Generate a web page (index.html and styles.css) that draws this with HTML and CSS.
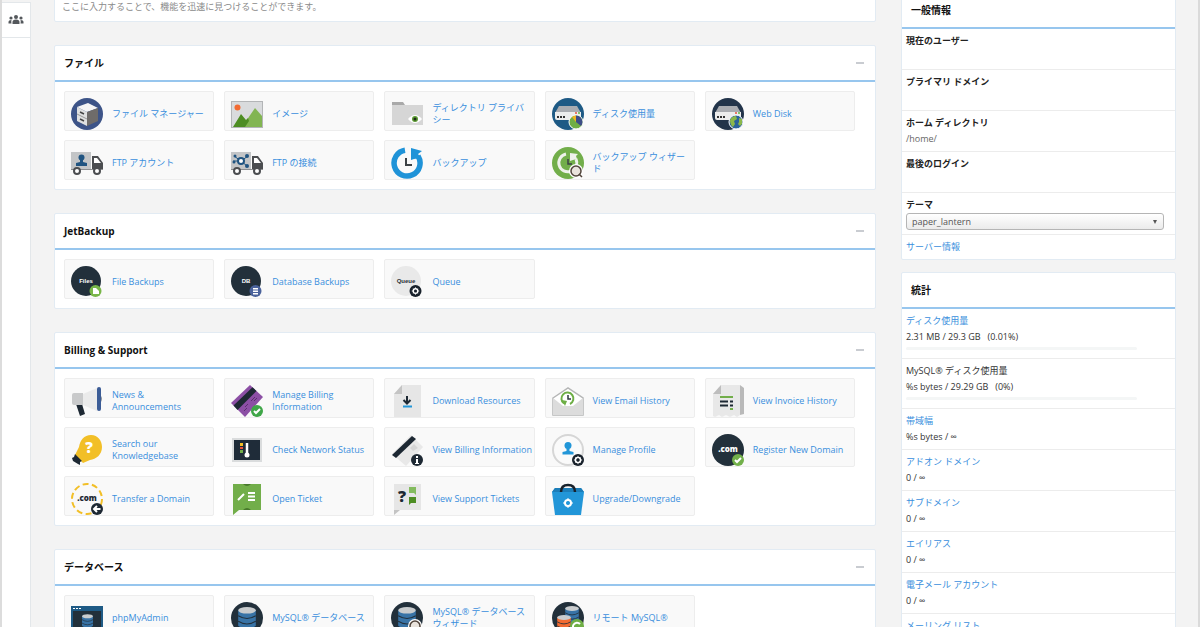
FILE: index.html
```html
<!DOCTYPE html>
<html lang="ja">
<head>
    <meta charset="UTF-8">
    <meta name="viewport" content="width=device-width, initial-scale=1.0">
    <title>cPanel</title>
    <link rel="stylesheet" href="styles.css">
</head>
<body>
    <!-- shared icon parts -->
    <svg class="defs" aria-hidden="true">
        <symbol id="truck" viewBox="0 0 32 32">
            <rect x="0" y="5" width="20" height="17" fill="#c3c5c7"/>
            <path d="M21 9h6l5 7v7H21z" fill="#4b4d50"/>
            <path d="M23 11h3l4 5h-7z" fill="#fff"/>
            <path d="M0 22h32v1H0z" fill="#8c8e90"/>
            <circle cx="6" cy="24" r="3" fill="#fff" stroke="#4b4d50" stroke-width="2"/>
            <circle cx="26" cy="24" r="3" fill="#fff" stroke="#4b4d50" stroke-width="2"/>
        </symbol>
        <symbol id="server" viewBox="0 0 32 32">
            <path d="M7 8h18l4 7H3z" fill="#a9acb1"/>
            <path d="M3 14h26v6q0 2-2 2H5q-2 0-2-2z" fill="#eceded"/>
            <path d="M5 18h2v2H5zM8 18h2v2H8zM11 18h2v2h-2z" fill="#333"/>
            <circle cx="24" cy="15" r="1" fill="#e8503a"/>
            <circle cx="27" cy="15" r="1" fill="#5fb548"/>
        </symbol>
        <symbol id="db" viewBox="0 0 16 20">
            <path d="M0 3v14q8 6 16 0V3z" fill="currentColor"/>
            <path d="M0 8q8 5 16 0M0 13q8 5 16 0" fill="none" stroke="#22303c" stroke-width="1"/>
            <ellipse cx="8" cy="3" rx="8" ry="3" fill="#c9ccce"/>
        </symbol>
        <symbol id="gear" viewBox="0 0 12 12">
            <circle cx="6" cy="6" r="3" fill="none" stroke="#fff" stroke-width="2"/>
            <path d="M6 1v10M1 6h10M3 3l6 6M9 3l-6 6" stroke="#fff" stroke-width="1"/>
            <circle cx="6" cy="6" r="2" fill="currentColor"/>
        </symbol>
    </svg>

    <div class="page">
        <nav class="sidebar">
            <a href="#" aria-label="User Manager">
                <svg width="16" height="12" viewBox="0 0 16 12" fill="#54585c">
                    <circle cx="8" cy="3" r="2"/>
                    <circle cx="3" cy="4" r="1.6"/>
                    <circle cx="13" cy="4" r="1.6"/>
                    <path d="M4.500 10V8q0-2.500 3.500-2.500T11.500 8v2zM.500 9.500V8q0-2 3-2-.500 1.500 0 3.500zM15.500 9.500V8q0-2-3-2 .500 1.500 0 3.500z"/>
                </svg>
            </a>
        </nav>

        <main class="main">
            <div class="panel search">
                <input type="text" aria-label="検索" placeholder="ここに入力することで、機能を迅速に見つけることができます。">
            </div>

            <section class="panel">
                <div class="panel-header">
                    <h2>ファイル</h2>
                    <button class="collapse" aria-label="折りたたむ"></button>
                </div>
                <div class="tiles">
                    <a href="#" class="tile">
                        <svg class="icon" viewBox="0 0 32 32">
                            <circle cx="16" cy="16" r="16" fill="#3d5488"/>
                            <path d="M6 9l11-4 10 5-11 4z" fill="#f6f6f6"/>
                            <path d="M6 9l10 5v14L6 23z" fill="#dfe0e0"/>
                            <path d="M16 14l11-4v13l-11 5z" fill="#6f6c6a"/>
                            <path d="M6 16l10 5" stroke="#9a9a9a"/>
                            <path d="M9 14l4 2M9 21l4 2" stroke="#444" stroke-width="1.500"/>
                        </svg>
                        <span>ファイル マネージャー</span>
                    </a>
                    <a href="#" class="tile">
                        <svg class="icon" viewBox="0 0 32 32">
                            <rect x="0.500" y="3.500" width="31" height="26" fill="#d9dbdd" stroke="#b3b5b7"/>
                            <circle cx="6.500" cy="9.500" r="3" fill="#f26b32"/>
                            <path d="M11 29L24 10l7 8v11z" fill="#82b552"/>
                            <path d="M2 29l8-13 5 6 2-2 1 3-4 6z" fill="#4d8d23"/>
                        </svg>
                        <span>イメージ</span>
                    </a>
                    <a href="#" class="tile">
                        <svg class="icon" viewBox="0 0 32 32">
                            <path d="M1 4h11l2 3v3H1z" fill="#a9a9a9"/>
                            <path d="M1 7h31v20H1z" fill="#d6d6d6"/>
                            <path d="M17 21q7-8 14 0-7 8-14 0z" fill="#fff"/>
                            <circle cx="24" cy="21" r="3" fill="#5d9b34"/>
                            <circle cx="24" cy="21" r="1.500" fill="#1d2a1a"/>
                        </svg>
                        <span>ディレクトリ プライバシー</span>
                    </a>
                    <a href="#" class="tile">
                        <svg class="icon" viewBox="0 0 32 32">
                            <circle cx="16" cy="16" r="16" fill="#1e5a85"/>
                            <use href="#server"/>
                            <circle cx="24" cy="24" r="7" fill="#6fae45" stroke="#fff"/>
                            <path d="M24 24v-6.500a6.500 6.500 0 0 1 5 10.500z" fill="#3d4d87"/>
                            <path d="M24 24v-6.500a6.500 6.500 0 0 0-4 1.500z" fill="#f0b323"/>
                        </svg>
                        <span>ディスク使用量</span>
                    </a>
                    <a href="#" class="tile">
                        <svg class="icon" viewBox="0 0 32 32">
                            <circle cx="16" cy="16" r="16" fill="#22344a"/>
                            <use href="#server"/>
                            <circle cx="24" cy="24" r="7" fill="#2a639c" stroke="#fff"/>
                            <path d="M18 22q2-4 6-4l1 3-3 2 1 3-2 3q-3-2-3-7zM27 20l3 1v5l-2 2-2-2 1-2z" fill="#8bb84a"/>
                        </svg>
                        <span>Web Disk</span>
                    </a>
                    <a href="#" class="tile">
                        <svg class="icon" viewBox="0 0 32 32">
                            <use href="#truck"/>
                            <circle cx="10.500" cy="10.500" r="3" fill="#205481"/>
                            <path d="M9 12h3v3l4 1v3H5v-3l4-1z" fill="#205481"/>
                        </svg>
                        <span>FTP アカウント</span>
                    </a>
                    <a href="#" class="tile">
                        <svg class="icon" viewBox="0 0 32 32">
                            <use href="#truck"/>
                            <path d="M3 9l7 5 7-5M2 14h8l6 5" fill="none" stroke="#205481"/>
                            <circle cx="10" cy="14" r="3" fill="#fff" stroke="#205481" stroke-width="2"/>
                            <circle cx="4" cy="9" r="1.500" fill="#205481"/>
                            <circle cx="16" cy="9" r="2" fill="#205481"/>
                            <circle cx="3" cy="15" r="1.500" fill="#205481"/>
                            <circle cx="16" cy="19" r="2" fill="#205481"/>
                        </svg>
                        <span>FTP の接続</span>
                    </a>
                    <a href="#" class="tile">
                        <svg class="icon" viewBox="0 0 32 32">
                            <path d="M14 3.200A13 13 0 1 0 27 9" fill="none" stroke="#1f93d8" stroke-width="5.500"/>
                            <path d="M20 1l11 3-4 3 3 4-7 1-3 1z" fill="#1f93d8"/>
                            <path d="M15 11v7h6" fill="none" stroke="#3c4145" stroke-width="2"/>
                        </svg>
                        <span>バックアップ</span>
                    </a>
                    <a href="#" class="tile">
                        <svg class="icon" viewBox="0 0 32 32">
                            <circle cx="16" cy="16" r="16" fill="#72ae4a"/>
                            <path d="M14 7A9 9 0 1 0 24 12" fill="none" stroke="#eef1ea" stroke-width="3"/>
                            <path d="M18 6l8 1-2 2 1 3-4 1-3 1z" fill="#eef1ea"/>
                            <path d="M16 12v5h4" fill="none" stroke="#3c4145" stroke-width="1.500"/>
                            <circle cx="24" cy="24" r="7" fill="#fff"/>
                            <circle cx="24" cy="24" r="5" fill="#e9e3dc" stroke="#51443b" stroke-width="1.500"/>
                            <path d="M27 27l3 3" stroke="#51443b" stroke-width="1.500"/>
                        </svg>
                        <span>バックアップ ウィザード</span>
                    </a>
                </div>
            </section>

            <section class="panel">
                <div class="panel-header">
                    <h2>JetBackup</h2>
                    <button class="collapse" aria-label="折りたたむ"></button>
                </div>
                <div class="tiles">
                    <a href="#" class="tile">
                        <svg class="icon" viewBox="0 0 32 32">
                            <circle cx="15" cy="15" r="15" fill="#22303b"/>
                            <text class="glyph" x="15" y="17" font-size="6" fill="#fff">Files</text>
                            <circle cx="24.500" cy="25" r="6" fill="#78b648"/>
                            <path d="M22 22h3l3 3v3h-6z" fill="#fff"/>
                        </svg>
                        <span>File Backups</span>
                    </a>
                    <a href="#" class="tile">
                        <svg class="icon" viewBox="0 0 32 32">
                            <circle cx="15" cy="15" r="15" fill="#22303b"/>
                            <text class="glyph" x="15" y="17" font-size="6" fill="#fff">DB</text>
                            <circle cx="24.500" cy="25" r="6" fill="#4a629b"/>
                            <path d="M22 22h5v1.500h-5zM22 24.500h5V26h-5zM22 27h5v1.500h-5z" fill="#fff"/>
                        </svg>
                        <span>Database Backups</span>
                    </a>
                    <a href="#" class="tile">
                        <svg class="icon" viewBox="0 0 32 32">
                            <circle cx="15" cy="15" r="15" fill="#e9e9e9"/>
                            <text class="glyph" x="15" y="17" font-size="6" fill="#2b3138">Queue</text>
                            <circle cx="24.500" cy="25" r="6" fill="#18212b"/>
                            <use href="#gear" x="20" y="20.500" width="9" height="9" color="#18212b"/>
                        </svg>
                        <span>Queue</span>
                    </a>
                </div>
            </section>

            <section class="panel">
                <div class="panel-header">
                    <h2>Billing &amp; Support</h2>
                    <button class="collapse" aria-label="折りたたむ"></button>
                </div>
                <div class="tiles">
                    <a href="#" class="tile">
                        <svg class="icon" viewBox="0 0 32 32">
                            <path d="M5 19h6l3 10-5 2z" fill="#1d2833"/>
                            <path d="M12 9L26 3v23l-14-6z" fill="#ebebeb"/>
                            <path d="M3 8h9v12H3q-2 0-2-2v-8q0-2 2-2z" fill="#c9cacb"/>
                            <rect x="26" y="2" width="4" height="24" rx="2" fill="#3b5c96"/>
                            <path d="M30 11q2 2 0 6z" fill="#8d9299"/>
                        </svg>
                        <span>News &amp; Announcements</span>
                    </a>
                    <a href="#" class="tile">
                        <svg class="icon" viewBox="0 0 32 32">
                            <path d="M19 0l13 12-18 20L0 18z" fill="#8c4fa5"/>
                            <path d="M21.500 2.300l4 3.700L6.500 25l-4-4.500z" fill="#1d2833"/>
                            <path d="M20 16l4-4M23 16l3-3M14 22l3-3M13 26l3-3" stroke="#5c2f70"/>
                            <circle cx="26" cy="26" r="6" fill="#3fa648"/>
                            <path d="M23 26l2 2 4-4" fill="none" stroke="#fff" stroke-width="2"/>
                        </svg>
                        <span>Manage Billing Information</span>
                    </a>
                    <a href="#" class="tile">
                        <svg class="icon" viewBox="0 0 32 32">
                            <path d="M11 0h19v32H3V9z" fill="#e6e6e6"/>
                            <path d="M11 0v9H3z" fill="#c4c4c4"/>
                            <path d="M16 11v7M12.500 15l3.500 3.500 3.500-3.500" fill="none" stroke="#1d2833" stroke-width="2"/>
                            <path d="M12 20.500h9v2h-9z" fill="#2296d8"/>
                        </svg>
                        <span>Download Resources</span>
                    </a>
                    <a href="#" class="tile">
                        <svg class="icon" viewBox="0 0 32 32">
                            <path d="M1 13L16 3l15 10v17H1z" fill="#fff" stroke="#b5b6b6" stroke-width="1.500"/>
                            <path d="M1 13l10 8h10l10-8v17H1z" fill="#dcdcdc"/>
                            <path d="M12 18.500A6 6 0 1 1 18 19" fill="none" stroke="#6dae45" stroke-width="2"/>
                            <path d="M10 15l5 1-2 5z" fill="#6dae45"/>
                            <path d="M16 10v4h3" fill="none" stroke="#2d363e" stroke-width="1.500"/>
                        </svg>
                        <span>View Email History</span>
                    </a>
                    <a href="#" class="tile">
                        <svg class="icon" viewBox="0 0 32 32">
                            <path d="M12 0h16l4 3v26l-4 1z" fill="#b9b9b9"/>
                            <path d="M9 0h19v30l-3 2-3-2-4 2-4-2-4 2-3-2-4 2-2-1V9z" fill="#e8e8e8"/>
                            <path d="M9 0v9H1z" fill="#bdbdbd"/>
                            <path d="M8 11h13v2H8z" fill="#72ae4a"/>
                            <path d="M8 15.500h8v2H8zM8 19.500h8v2H8zM18 15.500h3v2h-3zM18 19.500h3v2h-3z" fill="#1d2833"/>
                            <path d="M18 23h3v2h-3z" fill="#72ae4a"/>
                        </svg>
                        <span>View Invoice History</span>
                    </a>
                    <a href="#" class="tile">
                        <svg class="icon" viewBox="0 0 32 32">
                            <path d="M20 1c7 0 11 6 11 12 0 8-6 12-12 13l-7 3-8-8 4-8C9 6 13 1 20 1z" fill="#f2bf27"/>
                            <path d="M4 20l7 7-2 1v3l-2-1-5-3-1-3 2-1z" fill="#1d2833"/>
                            <text class="glyph sans" x="18" y="19" font-size="15" fill="#fff">?</text>
                        </svg>
                        <span>Search our Knowledgebase</span>
                    </a>
                    <a href="#" class="tile">
                        <svg class="icon" viewBox="0 0 32 32">
                            <rect x="1" y="4" width="30" height="24" fill="#dadcdd"/>
                            <rect x="3" y="6" width="26" height="20" fill="#1f2c39"/>
                            <path d="M9 9h3v3H9z" fill="#f2bf27"/>
                            <path d="M9 13h3v2H9z" fill="#e8503a"/>
                            <path d="M9 16h3v3H9z" fill="#72ae4a"/>
                            <path d="M16 9v11" stroke="#fff" stroke-width="2.500"/>
                            <circle cx="16" cy="21" r="2.500" fill="#fff"/>
                        </svg>
                        <span>Check Network Status</span>
                    </a>
                    <a href="#" class="tile">
                        <svg class="icon" viewBox="0 0 32 32">
                            <path d="M20 1l12 12-17 19L1 20z" fill="#e8e8e8"/>
                            <path d="M19 14l4-4 4 4-5 3z" fill="#d5d5d5"/>
                            <path d="M21 2l4 3L5 24l-4-3z" fill="#1d2833"/>
                            <circle cx="26" cy="26" r="6" fill="#1d2833"/>
                            <path d="M25 22h2v2h-2zM25 25h2v4h1v1h-4v-1h1z" fill="#fff"/>
                        </svg>
                        <span>View Billing Information</span>
                    </a>
                    <a href="#" class="tile">
                        <svg class="icon" viewBox="0 0 32 32">
                            <circle cx="16" cy="16" r="15" fill="#fafafa" stroke="#d6d6d6" stroke-width="2"/>
                            <circle cx="16" cy="11.500" r="3.500" fill="#2296d8"/>
                            <path d="M14.500 13h3v4l4 1v2.500h-11V18l4-1z" fill="#2296d8"/>
                            <circle cx="26" cy="26" r="6" fill="#18212b"/>
                            <use href="#gear" x="21" y="21" width="10" height="10" color="#18212b"/>
                        </svg>
                        <span>Manage Profile</span>
                    </a>
                    <a href="#" class="tile">
                        <svg class="icon" viewBox="0 0 32 32">
                            <circle cx="16" cy="16" r="16" fill="#22303b"/>
                            <text class="glyph sans" x="16" y="18" font-size="8" fill="#fff">.com</text>
                            <circle cx="26" cy="26" r="6" fill="#72b04a"/>
                            <path d="M23 26l2 2 4-4" fill="none" stroke="#fff" stroke-width="2"/>
                        </svg>
                        <span>Register New Domain</span>
                    </a>
                    <a href="#" class="tile">
                        <svg class="icon" viewBox="0 0 32 32">
                            <circle cx="16" cy="16" r="15" fill="none" stroke="#f2bf27" stroke-width="2" stroke-dasharray="6 3.400"/>
                            <text class="glyph sans" x="16" y="18" font-size="8" fill="#1d2833">.com</text>
                            <circle cx="26" cy="26" r="6" fill="#1d2833"/>
                            <path d="M29.500 26H24M26 23l-3 3 3 3" fill="none" stroke="#fff" stroke-width="2"/>
                        </svg>
                        <span>Transfer a Domain</span>
                    </a>
                    <a href="#" class="tile">
                        <svg class="icon" viewBox="0 0 32 32">
                            <path d="M2 1h28v26H8l-6 5z" fill="#72ae4a"/>
                            <path d="M12 1h8q-4 4-8 0zM12 27q4-4 8 0z" fill="#48792c"/>
                            <path d="M7 17l6-6M17 10h7M17 13.500h7M17 17h7" stroke="#fff" stroke-width="2"/>
                        </svg>
                        <span>Open Ticket</span>
                    </a>
                    <a href="#" class="tile">
                        <svg class="icon" viewBox="0 0 32 32">
                            <path d="M3 1h27v26H3z" fill="#e6e6e6"/>
                            <path d="M3 27h6l-6 5z" fill="#c4c4c4"/>
                            <text class="glyph sans" x="11" y="19" font-size="16" fill="#1d2833">?</text>
                            <path d="M18 4h7v8l-2-2h-5z" fill="#83bb5e"/>
                            <path d="M18 14h7v6h-5l-2 2z" fill="#4d8d23"/>
                        </svg>
                        <span>View Support Tickets</span>
                    </a>
                    <a href="#" class="tile">
                        <svg class="icon" viewBox="0 0 32 32">
                            <path d="M3 5h26l3 4-3 23H3L0 9z" fill="#2296d8"/>
                            <path d="M3 5h26l3 4H0z" fill="#1c7db8"/>
                            <path d="M9 9q0-7 7-7t7 7" fill="none" stroke="#18212b" stroke-width="2.500"/>
                            <use href="#gear" x="10" y="14" width="12" height="12" color="#2296d8"/>
                        </svg>
                        <span>Upgrade/Downgrade</span>
                    </a>
                </div>
            </section>

            <section class="panel">
                <div class="panel-header">
                    <h2>データベース</h2>
                    <button class="collapse" aria-label="折りたたむ"></button>
                </div>
                <div class="tiles">
                    <a href="#" class="tile">
                        <svg class="icon" viewBox="0 0 32 32">
                            <path d="M0 4h32v28H0z" fill="#1e5a85"/>
                            <path d="M2 9h28v21H2z" fill="#22303b"/>
                            <path d="M2 6h2v1H2zM5 6h2v1H5zM8 6h2v1H8z" fill="#fff"/>
                            <use href="#db" x="11" y="11" width="11" height="16" color="#3873a6"/>
                        </svg>
                        <span>phpMyAdmin</span>
                    </a>
                    <a href="#" class="tile">
                        <svg class="icon" viewBox="0 0 32 32">
                            <circle cx="16" cy="16" r="16" fill="#22303b"/>
                            <use href="#db" x="7" y="5" width="18" height="22" color="#3873a6"/>
                        </svg>
                        <span>MySQL® データベース</span>
                    </a>
                    <a href="#" class="tile">
                        <svg class="icon" viewBox="0 0 32 32">
                            <circle cx="16" cy="16" r="16" fill="#22303b"/>
                            <use href="#db" x="7" y="5" width="18" height="22" color="#3873a6"/>
                            <circle cx="24" cy="24" r="7" fill="#fff"/>
                            <circle cx="24" cy="24" r="5" fill="#e9e3dc" stroke="#51443b" stroke-width="1.500"/>
                        </svg>
                        <span>MySQL® データベース ウィザード</span>
                    </a>
                    <a href="#" class="tile">
                        <svg class="icon" viewBox="0 0 32 32">
                            <circle cx="16" cy="16" r="16" fill="#22303b"/>
                            <use href="#db" x="13" y="4" width="14" height="17" color="#3873a6"/>
                            <use href="#db" x="5" y="13" width="14" height="17" color="#f26b32"/>
                            <circle cx="25" cy="24" r="7" fill="#6fae45"/>
                            <path d="M28 22a4 4 0 1 0 1 3" fill="none" stroke="#fff" stroke-width="2"/>
                        </svg>
                        <span>リモート MySQL®</span>
                    </a>
                </div>
            </section>
        </main>

        <aside class="side">
            <section class="panel">
                <div class="panel-header">
                    <h2>一般情報</h2>
                </div>
                <ul class="info">
                    <li><strong>現在のユーザー</strong><span class="value"></span></li>
                    <li><strong>プライマリ ドメイン</strong><span class="value"></span></li>
                    <li><strong>ホーム ディレクトリ</strong><span class="value path">/home/</span></li>
                    <li><strong>最後のログイン</strong><span class="value"></span></li>
                    <li>
                        <label for="theme">テーマ</label>
                        <div class="select-wrap">
                            <select id="theme">
                                <option>paper_lantern</option>
                            </select>
                        </div>
                    </li>
                    <li><a href="#">サーバー情報</a></li>
                </ul>
            </section>

            <section class="panel">
                <div class="panel-header">
                    <h2>統計</h2>
                </div>
                <ul class="info">
                    <li>
                        <a href="#">ディスク使用量</a>
                        <span class="value">2.31 MB / 29.3 GB &nbsp; (0.01%)</span>
                        <div class="bar"></div>
                    </li>
                    <li>
                        <span class="value">MySQL® ディスク使用量</span>
                        <span class="value">%s bytes / 29.29 GB &nbsp; (0%)</span>
                        <div class="bar"></div>
                    </li>
                    <li><a href="#">帯域幅</a><span class="value">%s bytes / ∞</span></li>
                    <li><a href="#">アドオン ドメイン</a><span class="value">0 / ∞</span></li>
                    <li><a href="#">サブドメイン</a><span class="value">0 / ∞</span></li>
                    <li><a href="#">エイリアス</a><span class="value">0 / ∞</span></li>
                    <li><a href="#">電子メール アカウント</a><span class="value">0 / ∞</span></li>
                    <li><a href="#">メーリング リスト</a><span class="value">0 / ∞</span></li>
                </ul>
            </section>
        </aside>
    </div>
</body>
</html>
```

FILE: styles.css
```css
* {
    box-sizing: border-box;
}
body {
    margin: 0;
    background-color: #f3f3f3;
    color: #333;
    font-family: "Open Sans", "Noto Sans CJK JP", sans-serif;
    font-size: 9px;
    line-height: 12px;
    line-break: strict;
}
a {
    color: #3a8fdd;
    text-decoration: none;
}
a:hover {
    text-decoration: underline;
}
.defs {
    display: none;
}
.page {
    display: flex;
    height: 100vh;
    overflow: hidden;
    border-left: 2px solid #dcdcdc;
    border-right: 2px solid #dadada;
}

/* left nav */
.sidebar {
    flex: none;
    width: 29px;
    margin-top: 2px;
    background-color: #fff;
    border-top: 1px solid #e3e7ea;
    border-right: 1px solid #e3e7ea;
}
.sidebar a {
    display: flex;
    align-items: center;
    justify-content: center;
    height: 35px;
    border-bottom: 1px solid #e3e7ea;
}

/* columns start a little above the fold */
.main {
    flex: 1;
    min-width: 0;
    margin: -9px 25px 0 23px;
}
.side {
    flex: none;
    width: 275px;
    margin: -8px 22px 0 0;
}

.panel {
    margin-bottom: 23px;
    background-color: #fff;
    border: 1px solid #e2ebf3;
    border-radius: 2px;
}
.side .panel {
    margin-bottom: 12px;
}
.panel-header {
    display: flex;
    align-items: center;
    justify-content: space-between;
    height: 36px;
    padding: 0 11px 0 9px;
    border-bottom: 2px solid #97c6ee;
}
.panel-header h2 {
    margin: 0;
    color: #111;
    font-size: 10px;
    font-weight: 700;
}
.collapse {
    width: 8px;
    height: 2px;
    padding: 0;
    border: none;
    background-color: #c9ccd1;
    cursor: pointer;
}

.search input {
    display: block;
    width: 100%;
    height: 29px;
    padding: 0 7px;
    border: none;
    background: none;
    font: inherit;
}
.search input::placeholder {
    color: #8a8a8a;
    opacity: 1;
}

/* feature tiles */
.tiles {
    display: grid;
    grid-template-columns: repeat(5, minmax(0, 1fr));
    gap: 9px 10px;
    padding: 9px 20px 9px 9px;
}
.tile {
    display: flex;
    align-items: center;
    gap: 9px;
    height: 40px;
    padding: 6px 0 0 6px;
    background-color: #f9f9f9;
    border: 1px solid #ededed;
    border-radius: 2px;
}
.icon {
    flex: none;
    width: 32px;
    height: 32px;
}
.glyph {
    font-family: "Liberation Sans", sans-serif;
    font-weight: 700;
    text-anchor: middle;
}
.glyph.sans {
    font-family: "Open Sans", sans-serif;
    font-weight: 800;
}

/* right column lists */
.info {
    margin: 0;
    padding: 0;
    list-style: none;
    line-height: 16px;
}
.info li {
    padding: 4px;
    border-bottom: 1px solid #ececec;
}
.info li:last-child {
    border-bottom: none;
}
.info strong,
.info label,
.info a,
.info .value {
    display: block;
}
.info strong,
.info label {
    color: #222;
    font-weight: 700;
}
.value {
    min-height: 16px;
}
.path {
    color: #666;
}
.select-wrap {
    position: relative;
    margin-right: 7px;
}
.select-wrap::after {
    content: "";
    position: absolute;
    top: 7px;
    right: 7px;
    border: 2px solid transparent;
    border-top: 4px solid #555;
    pointer-events: none;
}
.select-wrap select {
    display: block;
    width: 100%;
    height: 17px;
    padding: 0 5px;
    appearance: none;
    border: 1px solid #b5b5b5;
    border-radius: 3px;
    background: linear-gradient(#fff, #ebebeb);
    color: #555;
    font: inherit;
}
.bar {
    height: 3px;
    margin: 2px 34px 4px 0;
    background-color: #f4f6f6;
    border-radius: 2px;
}
```
